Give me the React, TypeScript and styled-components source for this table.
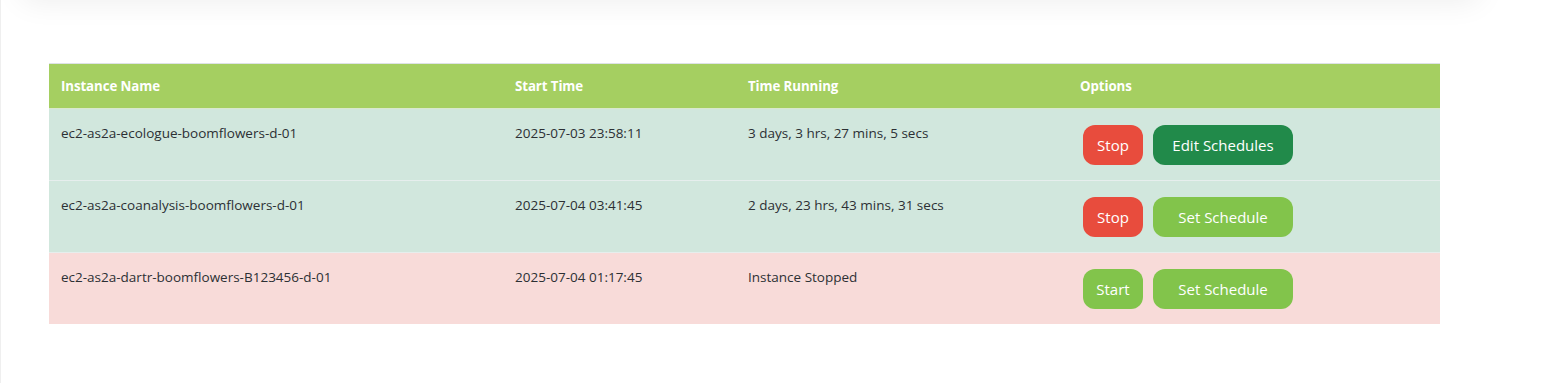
import React from "react";
import styled, { createGlobalStyle } from "styled-components";

const GlobalStyle = createGlobalStyle`
  html, body { margin: 0; padding: 0; background: #ffffff; }
  body { font-family: "Open Sans", "Noto Sans", sans-serif; }
`;

const Page = styled.div`
  min-height: 383px;
  border-left: 1px solid #efefef;
  box-sizing: border-box;
  overflow: hidden;
`;

const TopCard = styled.div`
  height: 40px;
  margin: -40px 75px 0 20px;
  background: #ffffff;
  box-shadow: 0 2px 30px rgba(0, 0, 0, 0.07);
  border-radius: 10px;
`;

const Content = styled.div`
  padding: 63px 0 0 48px;
`;

const Table = styled.table`
  width: 1391px;
  border-collapse: collapse;
  table-layout: fixed;
  border-top: 1px solid #dee2e6;
  font-size: 13.5px;
  color: #2c3034;
`;

const HeadCell = styled.th`
  background: #a5cf61;
  color: #ffffff;
  font-weight: 700;
  text-align: left;
  padding: 0 12px;
  height: 44px;
  line-height: 20px;
  font-size: 13.3px;
  letter-spacing: -0.1px;
`;

const Row = styled.tr<{ $tone: "ok" | "stopped" }>`
  background: ${(p) => (p.$tone === "ok" ? "#d1e7dd" : "#f8dbd9")};
  & > td { border-top: 1px solid rgba(236, 240, 242, 0.75); }
`;

const Cell = styled.td`
  vertical-align: top;
  padding: 14px 12px 12px;
  line-height: 20px;
`;

const Actions = styled.div`
  display: flex;
  align-items: center;
  gap: 10px;
  padding: 2px 0 3px;
  margin-left: 3px;
`;

const Button = styled.button<{ $variant: "red" | "dark" | "light"; $wide?: boolean }>`
  height: 40px;
  width: ${(p) => (p.$wide ? "140px" : "60px")};
  border: none;
  border-radius: 12px;
  color: #ffffff;
  font-family: "Open Sans", "Noto Sans", sans-serif;
  font-size: 15px;
  padding: 0;
  cursor: pointer;
  background: ${(p) =>
    p.$variant === "red" ? "#e84c3d" : p.$variant === "dark" ? "#218a4a" : "#82c44b"};
`;

type Inst = {
  name: string;
  start: string;
  running: string;
  on: boolean;
  schedule: "edit" | "set";
};

const data: Inst[] = [
  { name: "ec2-as2a-ecologue-boomflowers-d-01", start: "2025-07-03 23:58:11", running: "3 days, 3 hrs, 27 mins, 5 secs", on: true, schedule: "edit" },
  { name: "ec2-as2a-coanalysis-boomflowers-d-01", start: "2025-07-04 03:41:45", running: "2 days, 23 hrs, 43 mins, 31 secs", on: true, schedule: "set" },
  { name: "ec2-as2a-dartr-boomflowers-B123456-d-01", start: "2025-07-04 01:17:45", running: "Instance Stopped", on: false, schedule: "set" },
];

export default function App() {
  return (
    <>
      <GlobalStyle />
      <Page>
        <TopCard />
        <Content>
          <Table>
            <colgroup>
              <col style={{ width: 454 }} />
              <col style={{ width: 233 }} />
              <col style={{ width: 332 }} />
              <col style={{ width: 372 }} />
            </colgroup>
            <thead>
              <tr>
                <HeadCell>Instance Name</HeadCell>
                <HeadCell>Start Time</HeadCell>
                <HeadCell>Time Running</HeadCell>
                <HeadCell>Options</HeadCell>
              </tr>
            </thead>
            <tbody>
              {data.map((d) => (
                <Row key={d.name} $tone={d.on ? "ok" : "stopped"}>
                  <Cell>{d.name}</Cell>
                  <Cell>{d.start}</Cell>
                  <Cell>{d.running}</Cell>
                  <Cell>
                    <Actions>
                      {d.on ? (
                        <Button $variant="red">Stop</Button>
                      ) : (
                        <Button $variant="light">Start</Button>
                      )}
                      {d.schedule === "edit" ? (
                        <Button $variant="dark" $wide>Edit Schedules</Button>
                      ) : (
                        <Button $variant="light" $wide>Set Schedule</Button>
                      )}
                    </Actions>
                  </Cell>
                </Row>
              ))}
            </tbody>
          </Table>
        </Content>
      </Page>
    </>
  );
}
